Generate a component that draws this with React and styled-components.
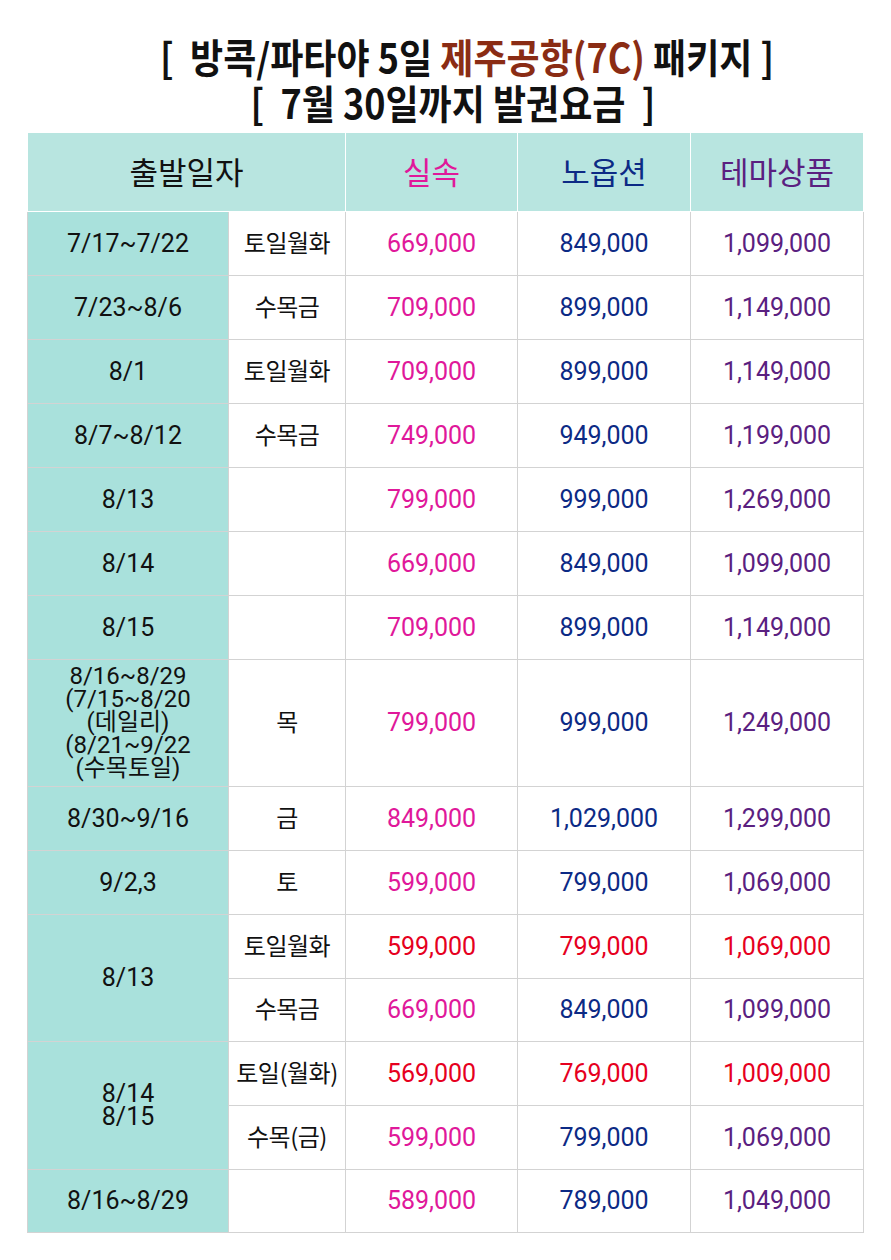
import React from 'react';
import styled, { createGlobalStyle } from 'styled-components';

const GlobalStyle = createGlobalStyle`
  html, body {
    margin: 0;
    padding: 0;
    background: #ffffff;
  }
  body {
    font-family: Roboto, "Noto Sans CJK KR", sans-serif;
    color: #111;
  }
`;

const Page = styled.div`
  width: 891px;
  padding: 33px 0 0;
`;

const TitleBlock = styled.div`
  display: flex;
  flex-direction: column;
  align-items: center;
  margin-bottom: 8px;
`;

const TitleLine = styled.div`
  display: inline-block;
  height: 46px;
  line-height: 46px;
  font-family: "Noto Sans CJK KR", sans-serif;
  font-weight: 700;
  font-size: 40px;
  color: #111;
  white-space: pre;
  transform: scaleX(0.9);
  margin-left: ${(p) => p.shift || 0}px;
`;

const Accent = styled.span`
  color: #8a2c14;
`;

const Table = styled.table`
  margin-left: 27px;
  width: 836px;
  border-collapse: collapse;
  table-layout: fixed;
  text-align: center;
`;

const Row = styled.tr`
  height: ${(p) => p.h}px;
`;

const HeadCell = styled.th`
  padding: 0 0 3px;
  background: #b8e5e0;
  border: 1px solid #ffffff;
  border-top: none;
  font-family: "Noto Sans CJK KR", sans-serif;
  font-weight: 400;
  font-size: 31px;
  color: ${(p) => p.color || '#111'};
`;

const DateCell = styled.td`
  padding: 0;
  background: #a9e1dc;
  border: 1px solid #d3d3d3;
  font-size: ${(p) => (p.tall ? 24 : 25)}px;
  line-height: 23px;
  color: #111;
  white-space: pre-line;
`;

const DayCell = styled.td`
  padding: 0 0 4px;
  border: 1px solid #d3d3d3;
  font-family: "Noto Sans CJK KR", sans-serif;
  font-size: 24px;
  color: #111;
  letter-spacing: -0.5px;
`;

const PriceCell = styled.td`
  padding: 0;
  border: 1px solid #d3d3d3;
  font-size: 25px;
  color: ${(p) => p.color};
`;

const COLORS = {
  basic: '#e0189a',
  nooption: '#0c2a85',
  theme: '#5a2080',
  red: '#e6001e',
};

const rows = [
  { date: '7/17~7/22', day: '토일월화', prices: ['669,000', '849,000', '1,099,000'] },
  { date: '7/23~8/6', day: '수목금', prices: ['709,000', '899,000', '1,149,000'] },
  { date: '8/1', day: '토일월화', prices: ['709,000', '899,000', '1,149,000'] },
  { date: '8/7~8/12', day: '수목금', prices: ['749,000', '949,000', '1,199,000'] },
  { date: '8/13', day: '', prices: ['799,000', '999,000', '1,269,000'] },
  { date: '8/14', day: '', prices: ['669,000', '849,000', '1,099,000'] },
  { date: '8/15', day: '', prices: ['709,000', '899,000', '1,149,000'] },
  {
    date: '8/16~8/29\n(7/15~8/20\n(데일리)\n(8/21~9/22\n(수목토일)',
    day: '목',
    h: 127,
    prices: ['799,000', '999,000', '1,249,000'],
  },
  { date: '8/30~9/16', day: '금', prices: ['849,000', '1,029,000', '1,299,000'] },
  { date: '9/2,3', day: '토', prices: ['599,000', '799,000', '1,069,000'] },
  { date: '8/13', span: 2, day: '토일월화', red: true, prices: ['599,000', '799,000', '1,069,000'] },
  { day: '수목금', h: 63, prices: ['669,000', '849,000', '1,099,000'] },
  { date: '8/14\n8/15', span: 2, day: '토일(월화)', red: true, prices: ['569,000', '769,000', '1,009,000'] },
  { day: '수목(금)', prices: ['599,000', '799,000', '1,069,000'] },
  { date: '8/16~8/29', day: '', h: 63, prices: ['589,000', '789,000', '1,049,000'] },
];

const priceColors = [COLORS.basic, COLORS.nooption, COLORS.theme];

const App = () => {
  return (
    <Page>
      <GlobalStyle />
      <TitleBlock>
        <TitleLine shift={44}>
          {'[  방콕/파타야 5일 '}
          <Accent>제주공항(7C)</Accent>
          {' 패키지 ]'}
        </TitleLine>
        <TitleLine shift={14}>{'[  7월 30일까지 발권요금  ]'}</TitleLine>
      </TitleBlock>

      <Table>
        <colgroup>
          <col style={{ width: 201 }} />
          <col style={{ width: 117 }} />
          <col style={{ width: 172 }} />
          <col style={{ width: 173 }} />
          <col style={{ width: 173 }} />
        </colgroup>
        <thead>
          <Row h={78}>
            <HeadCell colSpan={2}>출발일자</HeadCell>
            <HeadCell color={COLORS.basic}>실속</HeadCell>
            <HeadCell color={COLORS.nooption}>노옵션</HeadCell>
            <HeadCell color={COLORS.theme}>테마상품</HeadCell>
          </Row>
        </thead>
        <tbody>
          {rows.map((row, i) => (
            <Row key={i} h={row.h || 64}>
              {row.date !== undefined && (
                <DateCell rowSpan={row.span || 1} tall={row.h === 127}>
                  {row.date}
                </DateCell>
              )}
              <DayCell>{row.day}</DayCell>
              {row.prices.map((price, j) => (
                <PriceCell key={j} color={row.red ? COLORS.red : priceColors[j]}>
                  {price}
                </PriceCell>
              ))}
            </Row>
          ))}
        </tbody>
      </Table>
    </Page>
  );
};

export default App;
